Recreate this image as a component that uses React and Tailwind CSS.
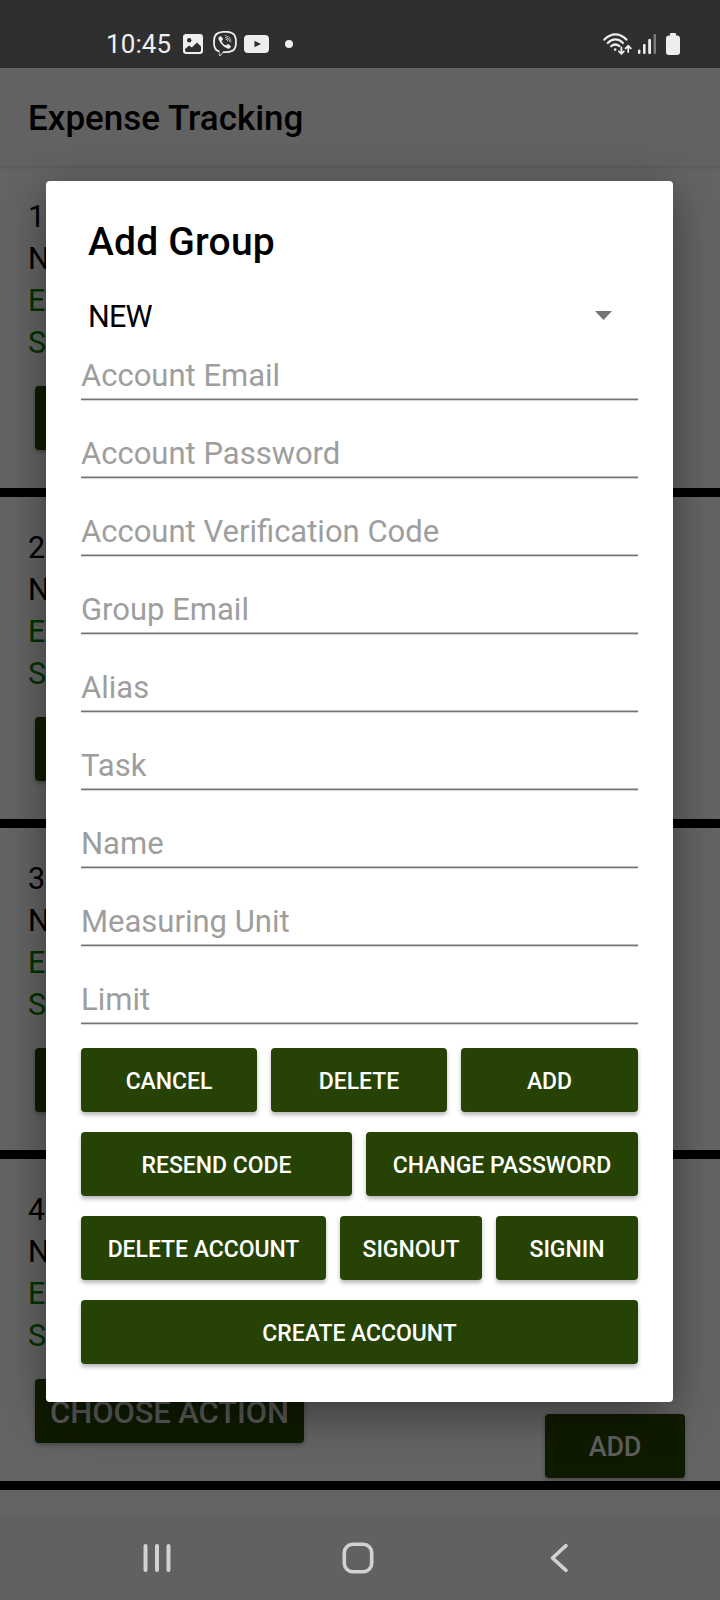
import React from "react";
import { FaViber } from "react-icons/fa";

const ITEMS = [
  { number: "1" },
  { number: "2" },
  { number: "3" },
  { number: "4", action: "CHOOSE ACTION" },
];

const FIELDS = [
  "Account Email",
  "Account Password",
  "Account Verification Code",
  "Group Email",
  "Alias",
  "Task",
  "Name",
  "Measuring Unit",
  "Limit",
];

function StatusBar() {
  return (
    <div className="flex h-[68px] items-center bg-[#2f2f2f] pt-5 pl-[106px] text-[#eeeeee]">
      <span className="w-[77px] text-[26px] leading-6 tracking-[0.1px]">10:45</span>
      <svg className="h-5 w-5" viewBox="0 0 20 20">
        <rect width="20" height="20" rx="3" fill="#eeeeee" />
        <circle cx="6.2" cy="6.2" r="2.2" fill="#2f2f2f" />
        <path d="M2 16.200V15l4.200-3.600 2.600 2.200L14 8.400l4 4v3.800a1.800 1.800 0 0 1-1.800 1.800H3.800A1.800 1.800 0 0 1 2 16.200Z" fill="#2f2f2f" />
      </svg>
      <FaViber className="mb-[2px] ml-[9px] h-[25px] w-[26px]" />
      <svg className="ml-[6px] h-[18px] w-[25px]" viewBox="0 0 25 18">
        <rect width="25" height="18" rx="4" fill="#eeeeee" />
        <path d="M10.500 5.800v6.400l6.500-3.200Z" fill="#2f2f2f" />
      </svg>
      <span className="ml-4 h-2 w-2 rounded-full bg-[#eeeeee]" />
      <svg className="ml-auto h-[22px] w-[29px]" viewBox="0 0 29 22" fill="none" stroke="#eeeeee" strokeWidth="2.2" strokeLinecap="round">
        <path d="M1.400 6.600Q6.500 1.400 12.400 1.400T23.400 6.600" />
        <path d="M4.800 10Q8.200 6.400 12.400 6.400T20 10" />
        <path d="M8.200 13.200Q12.300 9.800 16.400 13.200" />
        <circle cx="12.2" cy="16.6" r="1.3" fill="#eeeeee" stroke="none" />
        <path d="M18.400 14.400v6M16 18.400l2.400 2.400 2.400-2.400M25.200 19v-6M22.600 15.400l2.600-2.600 2.600 2.600" strokeWidth="1.8" />
      </svg>
      <svg className="ml-[6px] h-5 w-[18px]" viewBox="0 0 18 20" fill="#eeeeee">
        <rect x="0" y="15.5" width="2.4" height="4.5" rx="1" />
        <rect x="5" y="10" width="2.6" height="10" rx="1" />
        <rect x="10.2" y="5" width="2.8" height="15" rx="1" />
        <rect x="15.6" y="0" width="2.4" height="20" rx="1" fill="#7b7b7b" />
      </svg>
      <svg className="mr-10 mb-px ml-[10px] h-[22px] w-[14px]" viewBox="0 0 14 22" fill="#eeeeee">
        <rect x="4" y="0" width="6" height="6" rx="1" />
        <rect x="0" y="2.6" width="14" height="19.4" rx="3" />
      </svg>
    </div>
  );
}

function GroupItem({ number, action }) {
  return (
    <li className="flex h-[331px] flex-col items-start border-b-9 border-black pt-[30px] pl-[28px] text-[30.5px] leading-[42px]">
      <span>{number}</span>
      <span>N</span>
      <span className="text-[#003300]">E</span>
      <span className="text-[#003300]">S</span>
      <button className="mt-[22px] ml-[7px] h-16 w-[269px] rounded bg-[#0f1b00] pt-[3px] text-[31px] leading-[42px] font-medium tracking-[-0.1px] whitespace-nowrap text-[#5b5b5b] shadow-[0_2px_4px_rgba(0,0,0,0.3)]">
        {action}
      </button>
    </li>
  );
}

function Field({ label }) {
  return (
    <div className="flex h-[78px] flex-col justify-end">
      <span className="h-[43px] text-[31px] leading-[42px] text-[#9e9e9e]">{label}</span>
      <span className="h-[3px] border-y border-t-[#bcbcbc] border-b-[#d6d6d6] bg-[#757575]" />
    </div>
  );
}

function ActionButton({ className, children }) {
  return (
    <button
      className={
        "h-16 rounded bg-[#264204] pt-[4px] text-[23px] tracking-[-0.05px] font-medium whitespace-nowrap text-white shadow-[0_3px_4px_rgba(0,0,0,0.28)] " +
        className
      }
    >
      {children}
    </button>
  );
}

function Dialog() {
  return (
    <div className="absolute top-[181px] left-[46px] flex h-[1221px] w-[627px] flex-col rounded-[4px] bg-white px-[35px] text-black shadow-[0_12px_45px_rgba(0,0,0,0.42)]">
      <h2 className="mt-[37px] pl-[7px] text-[39px] leading-[48px] font-medium tracking-[0.2px]">Add Group</h2>
      <div className="mt-[29px] flex h-[42px] items-center justify-between pr-[26px] pl-[7px]">
        <span className="pt-[2px] text-[30.5px] leading-[42px] tracking-[-0.8px]">NEW</span>
        <svg className="mb-px h-[9px] w-[17px]" viewBox="0 0 17 9">
          <path d="M0 0h17L8.500 9Z" fill="#757575" />
        </svg>
      </div>
      <div className="-mt-[14px]">
        {FIELDS.map((label) => (
          <Field key={label} label={label} />
        ))}
      </div>
      <div className="mt-[23px] flex flex-col gap-5">
        <div className="flex gap-[14px]">
          <ActionButton className="w-[176px]">CANCEL</ActionButton>
          <ActionButton className="w-[176px]">DELETE</ActionButton>
          <ActionButton className="w-[177px]">ADD</ActionButton>
        </div>
        <div className="flex gap-[14px]">
          <ActionButton className="w-[271px]">RESEND CODE</ActionButton>
          <ActionButton className="w-[272px]">CHANGE PASSWORD</ActionButton>
        </div>
        <div className="flex gap-[14px]">
          <ActionButton className="w-[245px]">DELETE ACCOUNT</ActionButton>
          <ActionButton className="w-[142px]">SIGNOUT</ActionButton>
          <ActionButton className="w-[142px]">SIGNIN</ActionButton>
        </div>
        <ActionButton className="w-[557px]">CREATE ACCOUNT</ActionButton>
      </div>
    </div>
  );
}

function NavBar() {
  return (
    <nav className="flex h-[84px] items-center bg-[#616161]">
      <svg className="ml-[142px] h-[34px] w-[30px]" viewBox="0 0 30 34" stroke="#d2d2d2" strokeWidth="4" strokeLinecap="round">
        <path d="M3.500 5v24M15 5v24M26.500 5v24" />
      </svg>
      <svg className="ml-[169px] h-[34px] w-[34px]" viewBox="0 0 34 34" fill="none" stroke="#d2d2d2" strokeWidth="3.6">
        <rect x="3.3" y="3.3" width="27.4" height="27.4" rx="8.5" />
      </svg>
      <svg className="ml-[173px] h-[34px] w-[24px]" viewBox="0 0 24 34" fill="none" stroke="#d2d2d2" strokeWidth="3.6" strokeLinecap="round" strokeLinejoin="round">
        <path d="M18 4.700 4.500 17 18 29.300" />
      </svg>
    </nav>
  );
}

export default function App() {
  return (
    <div className="relative flex h-[1600px] w-[720px] flex-col overflow-hidden bg-[#646464] font-[Roboto,sans-serif] text-black">
      <StatusBar />
      <header className="flex h-[98px] items-center bg-[#626262] pt-1 pl-[28px] text-[35px] font-medium shadow-[0_1px_4px_rgba(0,0,0,0.15)]">
        Expense Tracking
      </header>
      <ul className="h-[1350px]">
        {ITEMS.map((item) => (
          <GroupItem key={item.number} number={item.number} action={item.action} />
        ))}
      </ul>
      <NavBar />
      <button className="absolute top-[1414px] left-[545px] h-16 w-[140px] rounded bg-[#0f1b00] pt-[2px] text-[27px] tracking-[-0.3px] font-medium text-[#5f5f5f] shadow-[0_2px_4px_rgba(0,0,0,0.3)]">
        ADD
      </button>
      <Dialog />
    </div>
  );
}
